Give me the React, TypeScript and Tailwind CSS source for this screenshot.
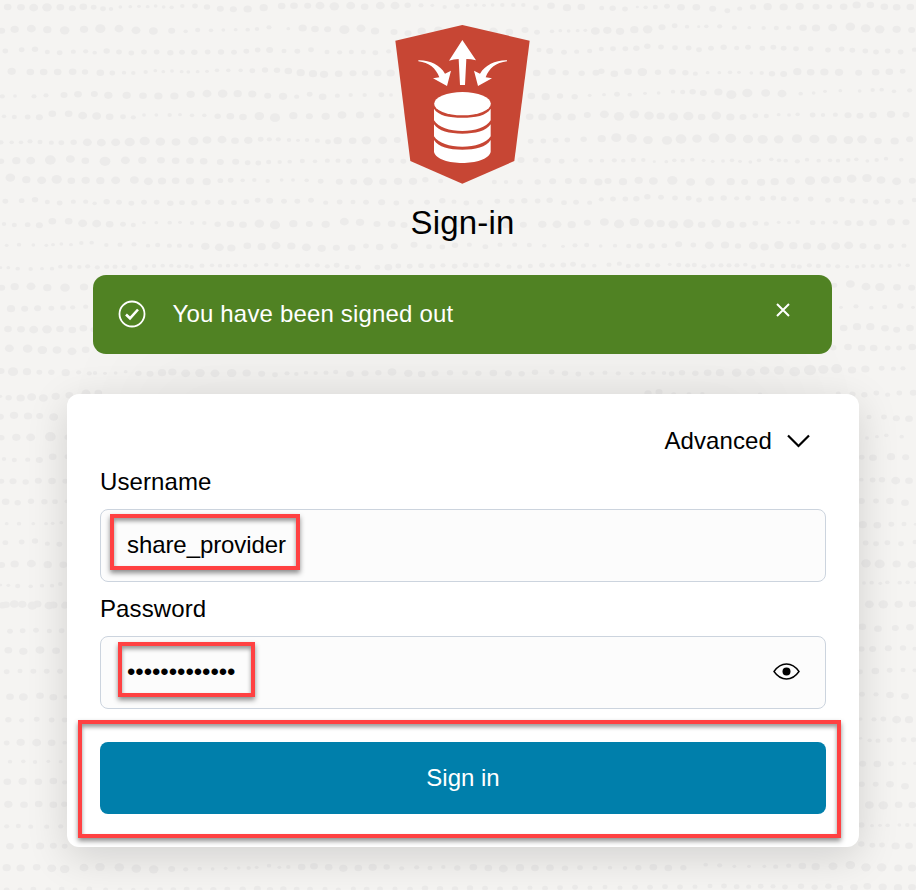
import React from "react";

// Dot texture: each token is "x,y,r" in thirds of a pixel, grouped by the
// horizontal offset (in pixels) of the strip it belongs to.
const strips: { x: number; y: number; dots: string }[] = [
  {
    x: 0,
    y: 0,
    dots: `23,21,12 63,22,12 101,23,14 141,22,15 181,22,12 217,25,11 250,20,12 281,22,9 309,26,9 333,27,7 361,21,6 391,20,6 417,19,6 443,20,6 467,18,6 491,21,6 515,22,7 547,18,7 585,18,9 621,21,10 661,26,11 700,28,11 743,27,13 791,23,13
    5,92,11 44,88,13 94,86,14 142,89,13 194,91,15 252,88,13 301,86,16 357,86,14 408,91,14 460,93,14 515,92,11 557,94,7 593,90,8 633,91,7 670,90,6 707,89,6 743,89,7 771,87,7 807,82,8
    16,153,9 65,149,9 105,148,10 142,156,8 179,158,9 220,155,8 257,154,8 284,158,7 320,153,10 357,156,9 394,159,9 432,156,9 470,156,9 511,158,10 546,157,9 583,157,10 623,156,9 663,156,10 702,157,9 739,154,9 773,150,9 809,150,11
    35,214,13 91,216,12 131,216,12 173,216,12 218,215,12 255,216,10 301,218,12 337,219,9 372,218,7 400,219,7 437,216,7 466,212,6 490,215,6 516,213,6 545,215,6 565,216,6 593,215,6 621,214,6 651,211,7 685,211,7 722,211,7 757,212,9 795,210,10 831,211,10
    7,289,8 45,288,6 102,289,8 138,286,8 192,285,11 234,283,12 283,282,11 325,286,13 380,286,13 429,287,12 475,288,13 523,288,13 572,283,13 621,281,14 668,281,15 713,281,13 757,282,13 803,287,11
    12,349,7 43,351,8 83,351,9 118,352,11 157,341,12 206,341,12 248,347,14 290,348,14 329,350,12 369,350,9 400,352,8 432,345,6 469,345,6 509,345,7 540,344,6 576,346,7 613,346,7 653,349,10 691,349,12 729,351,12 778,348,15 825,353,16
    3,427,8 35,427,7 63,427,7 90,424,8 120,426,8 154,428,8 184,428,9 221,427,10 262,427,14 304,428,14 347,427,14 389,426,16 434,423,16 481,425,15 528,426,14 580,423,16 621,420,14 666,419,14 705,422,12 745,421,13 782,418,9 808,418,8 835,418,8
    3,484,10 49,482,13 92,482,14 151,480,17 211,477,14 256,482,12 315,484,17 376,481,14 427,481,13 483,481,12 527,482,12 570,482,12 611,484,12 661,486,11 707,485,11 743,488,9 775,489,9 806,486,8 839,486,7
    31,533,15 79,539,13 125,541,14 170,538,16 214,542,12 257,541,13 301,542,13 347,541,14 403,540,14 445,544,14 486,543,13 527,542,12 570,543,13 620,545,13 661,542,9 692,541,9 728,541,7 763,540,7 803,543,7
    16,604,9 65,602,9 105,599,10 142,606,8 179,609,9 220,605,8 257,605,8 284,610,7 320,605,10 357,607,9 394,610,9 432,607,9 470,607,9 511,610,10 546,608,9 583,608,10 623,607,9 663,607,10 702,608,9 739,605,9 773,601,9 809,602,11
    12,672,7 43,675,8 83,674,9 118,676,11 157,664,12 206,664,12 248,670,14 290,671,14 329,673,12 369,673,9 400,675,8 432,668,6 469,668,6 509,668,7 540,667,6 576,669,7 613,669,7 653,673,10 691,672,12 729,674,12 778,671,15 825,675,16
    20,736,6 57,734,7 100,735,6 139,736,6 159,734,6 184,732,6 213,734,6 244,729,7 275,728,7 319,735,7 360,734,8 402,733,8 444,737,7 473,735,8 508,737,8 538,737,8 572,737,8 616,739,13 658,742,14 694,744,13 742,737,12 785,740,13 828,737,14
    2,803,5 25,803,6 53,806,7 92,807,7 126,806,6 156,806,7 181,800,7 210,800,8 238,801,7 263,799,8 292,802,8 320,800,8 345,800,8 371,799,7 404,803,9 440,798,6 462,798,7 488,797,7 514,797,7 537,799,7 560,798,7 575,801,7 606,797,8 636,796,7 660,797,7 684,797,7 708,796,7 735,797,7 768,796,7 799,794,7 829,795,7`,
  },
  {
    x: 280,
    y: 0,
    dots: `5,18,12 42,17,12 83,17,11 120,17,14 163,19,15 212,17,14 254,20,12 301,17,14 345,17,14 383,16,10 423,16,8 457,16,6 494,21,7 531,19,9 563,16,6 587,15,6 612,16,6 638,15,6 667,15,7 700,15,7 730,15,7 768,23,9 813,17,12 861,23,13 904,21,12
    25,86,6 68,84,13 105,87,12 143,88,11 193,89,16 243,85,14 285,93,13 342,96,11 384,100,11 425,93,13 475,90,13 530,92,12 585,92,12 640,94,14 688,96,12 735,90,11 771,97,9 816,94,7 841,92,6 866,93,6 893,92,6 916,91,6 946,93,14
    12,153,8 52,154,9 93,149,9 141,156,8 179,157,8 214,156,8 250,156,8 286,158,9 326,154,8 375,156,8 777,150,8 809,153,11 852,157,9 890,155,8 929,153,8
    25,213,12 62,218,13 99,221,13 132,223,13 176,221,12 219,220,11 255,219,10 293,219,12 332,219,13 770,219,12 816,215,12 857,218,10 905,220,10 948,218,11
    9,289,13 50,290,8 89,283,9 128,290,12 172,287,8 212,285,7 254,285,7 304,284,9 333,285,6 754,288,12 797,290,13 840,288,10 884,290,10 929,286,6
    40,347,13 88,349,11 137,349,13 186,345,14 240,345,13 291,346,11 335,348,9 749,350,12 787,351,13 831,350,14 875,351,13 922,345,11
    27,420,7 54,421,6 81,420,7 112,422,8 144,425,9 173,422,13 218,422,12 259,421,15 308,421,14 352,420,11 752,424,9 790,423,9 827,421,9 862,420,9 911,418,10
    29,485,7 67,483,8 105,484,7 142,482,8 174,482,8 207,484,9 255,483,10 294,483,9 334,482,9 370,484,9 723,480,11 767,480,9 803,482,10 845,484,9 887,481,8 932,482,7
    5,540,6 39,540,6 80,541,7 122,544,9 178,545,11 221,545,11 264,544,15 309,545,12 354,544,13 399,544,13 436,539,10 482,543,8 643,546,8 678,546,7 720,546,9 773,546,10 818,544,11 865,543,11 909,543,12 955,546,13
    12,604,9 52,604,9 93,601,9 137,608,8 179,606,9 219,606,8 258,607,9 305,607,11 349,609,9 393,606,9 441,607,9 487,602,10 522,605,8 559,609,9 600,607,9 652,604,9 695,604,9 733,602,10 773,603,9 809,601,10 852,608,9 888,607,9 929,608,8
    40,671,13 88,672,11 137,673,13 193,665,14 240,667,13 291,672,11 335,671,12 372,675,11 420,672,13 480,672,10 530,671,13 580,672,12 630,669,13 680,674,13 730,674,11 787,673,13 831,673,14 875,674,13 922,668,11
    34,738,13 79,742,14 125,745,13 169,743,11 215,743,12 258,738,9 299,741,12 343,739,11 402,734,11 447,740,9 487,741,9 525,736,10 568,734,8 616,740,9 660,734,8 704,734,8 748,735,8 793,737,7 849,739,6 885,736,8 920,735,8
    20,798,6 53,797,8 82,796,8 112,796,8 142,799,8 170,796,9 201,801,8 234,802,9 292,802,9 325,802,12 355,798,9 389,799,9 423,797,9 457,799,9 489,796,8 524,799,9 556,795,9 588,797,9 620,795,9 653,796,8 687,800,8 719,800,8 751,798,8 786,796,9 817,796,8 850,795,9 879,793,9 910,797,8 943,797,7`,
  },
  {
    x: 600,
    y: 0,
    dots: `5,24,8 38,25,10 75,27,9 112,21,5 137,22,7 166,21,8 201,19,9 243,22,12 289,22,12 338,26,11 382,32,9 419,26,8 459,21,10 503,20,13 551,21,13 599,19,13 648,20,11 688,20,9 731,20,12 770,15,13 811,15,12 853,20,12 890,22,12 931,21,12
    22,91,13 60,94,13 103,89,13 143,88,15 186,82,11 224,77,9 261,80,7 296,80,5 319,79,7 359,79,8 403,83,8 448,83,6 491,84,7 529,84,8 566,83,8 609,83,12 648,84,13 698,83,14 751,80,15 797,85,15 839,88,15 890,88,13 935,90,11
    4,147,8 39,146,9 76,146,9 109,145,10 142,139,10 183,141,9 225,143,9 266,144,9 297,149,9 333,145,9 371,142,10 410,144,8 444,142,9 487,145,9 520,142,9 551,145,9 588,146,9 632,146,9 684,150,9 725,147,9 757,151,9 796,153,9 828,156,9 863,153,9 902,156,9 943,149,8
    4,214,10 43,221,12 84,215,12 127,216,15 174,217,10 217,215,11 256,218,10 286,221,8 323,218,6 358,218,6 390,217,7 417,217,6 454,219,6 485,219,7 516,221,10 551,222,11 592,215,13 632,217,12 673,216,13 717,217,13 776,218,11 827,217,12 868,215,12 908,214,9
    12,284,6 51,283,9 89,284,7 135,280,6 176,279,6 219,275,7 248,276,8 278,275,10 310,279,11 355,276,13 394,284,16 442,279,16 497,279,14 546,281,14 602,281,7 641,279,6 675,274,6 721,272,6 779,273,6 818,270,7 845,269,7 882,274,7 929,271,8
    13,343,14 57,349,16 103,343,15 147,347,15 182,348,13 220,350,15 265,348,16 305,351,12 349,347,15 391,351,13 429,351,11 466,347,9 499,348,8 536,344,6 567,345,6 593,343,7 638,345,9 669,345,7 706,344,8 744,346,11 780,347,11 819,345,12 873,343,13 918,344,11
    5,416,13 49,413,16 95,415,16 144,420,15 201,421,16 243,417,17 291,416,15 342,414,17 392,415,17 444,417,16 488,418,16 536,418,15 591,416,16 643,417,16 696,418,16 745,420,15 786,418,15 834,423,12 884,423,13 929,418,11
    6,482,7 43,481,8 70,482,7 100,480,8 130,480,7 163,485,5 199,485,6 223,481,7 248,482,7 277,479,7 311,481,6 338,484,6 369,483,6 396,481,7 420,484,6 451,486,6 477,481,7 514,478,7 537,481,7 557,482,7 592,484,8 621,479,7 656,482,7 690,481,7 714,482,7 745,480,7 769,478,7 802,483,6 830,480,7 858,476,7 904,479,7
    24,543,11 69,545,13 116,541,13 160,543,14 217,541,16 272,546,14 330,545,15 392,545,13 434,546,11 483,547,13 524,545,13 572,543,14 630,542,16 676,540,14 712,539,13 755,536,15 801,534,15 843,540,14 890,544,14 937,542,11
    4,598,8 39,597,9 76,597,9 109,596,10 142,590,10 183,592,9 225,594,9 266,595,9 297,600,9 333,596,9 371,594,10 410,595,8 444,594,9 487,596,9 520,594,9 551,596,9 588,598,9 632,597,9 684,601,9 725,598,9 757,603,9 796,604,9 828,607,9 863,604,9 902,607,9 943,600,8
    13,666,14 57,672,16 103,666,15 147,670,15 182,671,13 220,673,15 265,671,16 305,674,12 349,670,15 391,674,13 429,674,11 466,670,9 499,671,8 536,667,6 567,668,6 593,666,7 638,668,9 669,668,7 706,667,8 744,669,11 780,670,11 819,668,12 873,666,13 918,667,11
    2,738,6 45,737,7 86,738,8 119,738,10 155,738,10 193,737,9 236,733,11 280,735,9 328,736,14 375,735,13 414,738,10 460,737,14 494,741,13 537,735,15 580,737,13 621,738,13 665,740,14 707,738,14 746,736,14 789,738,11 832,740,11 873,738,9 912,737,8
    27,794,8 58,791,8 85,798,8 112,796,8 143,795,8 173,796,8 209,793,6 236,795,8 263,796,8 283,795,8 312,799,8 338,796,8 363,796,8 387,796,8 411,796,8 436,794,7 461,800,8 488,795,8 516,798,8 550,798,8 580,798,8 598,800,8 628,796,8 655,798,8 685,797,8 713,799,8 742,800,6 771,800,7 791,798,7 818,798,7 844,798,7 869,798,7 898,795,6 923,796,7`,
  },
  {
    x: 0,
    y: 270,
    dots: `5,53,11 44,50,13 93,49,14 142,53,13 195,53,15 252,51,13
    33,116,13 74,116,11 113,115,11 154,115,9 189,113,9 218,112,8 257,110,8
    24,177,12 63,178,12 101,179,14 141,178,15 180,177,12 217,180,12 250,175,12 280,179,9
    28,235,14 83,236,15 127,240,15 171,240,14 216,244,14 257,239,12
    3,303,11 39,305,16 81,305,13 118,307,9 154,307,10 197,308,13 236,307,8 268,310,8
    1,379,6 26,383,10 62,384,13 95,381,14 130,384,14 167,379,13 208,376,12 258,370,14 295,369,12
    1,440,11 42,436,13 84,438,13 119,438,11 161,441,14
    4,503,10 49,502,13 92,502,14 151,500,17 203,502,10
    12,567,7 43,570,8 83,569,8 118,570,11 158,560,12 202,560,9
    4,634,9 39,634,11 77,636,10 115,632,11 156,633,12 196,634,9
    17,695,12 53,698,10 93,694,10 133,695,10 165,695,9 200,694,7
    20,761,6 57,761,7 100,761,6 138,761,6 158,760,6 184,758,6
    16,818,9 65,816,9 105,813,10 142,821,8 178,823,9
    5,885,11 44,882,13 94,881,14 143,884,13 190,884,12
    2,945,5 25,946,6 53,948,8 92,949,7 126,947,7 156,947,7 181,942,7
    8,1006,12 43,1002,14 97,1007,15 147,1007,14 194,1007,11`,
  },
  {
    x: 640,
    y: 265,
    dots: `583,61,9 631,57,14 678,65,14 720,66,15 771,67,12 815,68,11
    603,127,6 648,124,8 694,128,7 734,126,8 781,123,10 819,127,6
    611,189,12 651,185,13 691,185,13 735,190,12 770,194,11 810,189,12
    580,248,10 624,246,12 665,249,12 701,249,12 743,249,9 777,249,9 817,246,12
    11,325,7 40,323,7 72,324,7 95,326,9 126,323,10 166,325,10 203,323,12 240,323,13 290,323,15 332,322,14 374,317,15 417,316,16 464,320,17 510,315,19 550,313,16 590,311,17 636,315,13 676,312,13 725,310,9 760,311,8 789,310,8
    24,385,11 57,381,11 101,388,8 147,388,8 187,387,7 360,388,7 595,386,8 637,388,10 673,389,10 709,384,9 743,389,8 778,384,9 820,383,11
    687,456,8 732,456,9 769,460,11 807,461,12
    681,519,6 711,515,6 739,511,7 785,515,7
    665,577,9 699,578,12 753,575,13 797,577,11`,
  },
  {
    x: 85,
    y: 265,
    dots: `30,324,7 60,325,6 92,324,6 122,320,6 160,325,10 195,326,11 231,323,13 262,321,13 302,325,14 345,324,15 390,325,14 440,324,15 485,324,13 530,326,11 570,329,9 606,325,8 634,327,7 663,323,7 692,324,7 723,323,8 752,321,8 795,326,12 840,325,11 880,323,10 921,321,14 970,325,13 1010,327,12 1050,325,11 1095,323,10 1140,323,9 1180,325,10 1225,324,12 1270,325,11 1310,326,10 1350,322,10 1400,321,9 1440,325,10 1480,327,9 1520,325,8 1560,323,8 1600,325,8 1640,325,7`,
  },
  {
    x: 846,
    y: 380,
    dots: `46,299,7 80,300,9 108,299,10 149,302,14 189,302,12
    46,363,11 90,363,9 132,363,12 177,368,12
    50,434,13 94,436,12 136,433,9 174,432,8 208,433,5
    59,489,9 90,491,9 124,488,9 165,491,9 207,486,8
    60,550,15 101,552,16 152,552,13 198,554,14
    54,609,6 77,608,7 103,610,6 124,607,7 161,608,7 185,607,7 208,608,5`,
  },
  {
    x: 700,
    y: 600,
    dots: `508,13,14 550,13,15 596,13,13 638,12,12
    487,80,12 534,86,12 586,84,11 630,82,12
    484,147,10 518,147,11 565,145,11 609,144,10 644,146,7
    480,215,9 526,213,12 569,211,9 609,210,8 644,211,7
    486,283,9 528,283,8 570,285,12 615,289,12
    482,357,6 522,358,8 550,357,9 590,359,14 627,359,13
    482,415,5 509,421,7 534,422,8 569,420,9 611,419,9 641,419,9
    488,491,11 532,492,12 573,491,9 612,490,7 645,490,6
    485,553,10 527,553,9 570,553,12 615,559,12
    508,615,14 550,616,15 596,614,12 637,615,12
    484,675,10 516,677,6 540,676,6 563,676,7 598,675,6 622,675,7 645,675,6
    484,732,10 517,736,9 546,735,9 587,738,13 627,737,12
    17,794,7 59,796,8 103,799,6 147,799,6 193,799,6 227,800,8 266,797,8 307,798,12 347,800,13 399,799,14 451,795,15 498,802,15 545,802,15 595,804,13 636,804,13
    30,858,8 72,858,9 110,860,9 146,860,8 182,859,9 219,859,8 255,861,9 303,859,10 344,862,10 385,859,10 420,863,10 462,862,12 502,859,12 548,861,13 594,863,13 636,862,12`,
  },
  {
    x: 60,
    y: 590,
    dots: `-162,44,12 -113,43,13 -68,42,13 -20,45,13 15,41,8
    -150,124,9 -112,122,9 -72,121,9 -32,123,8 5,122,9
    -155,181,12 -110,184,13 -60,180,14 -12,182,12
    -160,245,9 -120,243,8 -80,244,9 -40,244,9 0,244,9
    -150,320,12 -110,321,14 -60,317,12 -20,322,12 17,321,7
    -155,389,10 -115,391,8 -70,388,9 -25,390,9 14,390,9
    -160,459,9 -118,457,13 -70,458,14 -25,458,12 14,458,7
    -150,515,7 -110,514,7 -75,516,7 -35,514,6 2,515,6
    -158,575,12 -112,574,13 -65,575,12 -20,573,12 14,577,8
    -155,643,13 -108,644,12 -64,642,12 -20,644,12 13,643,10
    -160,709,8 -125,708,8 -88,710,8 -40,710,8 2,709,8
    -150,769,12 -105,768,12 -60,768,13 -20,767,11 14,769,9
    -160,833,13 -118,834,13 -70,832,12 -25,835,14 14,837,15 72,833,14 120,831,15 178,832,15 229,836,15 281,838,15 335,837,11 377,838,8 419,836,7 458,837,6 497,835,6 536,834,6 566,834,7 590,832,6 627,827,7 658,832,6 685,831,7 725,831,12 762,829,12 806,832,12 850,835,13 895,834,12 938,832,13 980,831,10 1025,835,8 1070,832,8 1110,834,8 1150,831,7 1192,834,10 1240,832,12 1285,834,12 1330,836,14 1380,833,13 1425,834,12 1470,833,12 1515,835,10 1560,833,9 1605,834,8 1650,833,7 1695,834,7 1735,833,10 1780,832,12 1825,834,12 1870,833,10
    -160,900,9 -120,899,8 -80,898,9 -35,899,9 5,898,9 45,899,8 88,897,9 137,899,8 180,899,8 220,899,7 260,899,8 300,899,9 340,899,9 380,898,9 419,899,9 460,899,10 502,898,9 548,898,10 592,896,11 630,899,10 670,897,10 710,898,9 750,898,9 795,897,8 835,899,8 880,896,8 920,898,9 960,897,9 1005,896,8 1050,898,9 1095,895,10 1140,896,10 1185,897,10 1230,894,10 1275,895,9 1320,897,9 1365,895,9 1410,893,8 1455,895,9 1500,893,9 1545,892,9 1590,893,8 1635,891,8 1680,893,8 1725,892,9 1770,892,9 1815,890,9 1860,891,9 1905,890,8`,
  },
];

function Texture() {
  return (
    <svg className="absolute inset-0 -z-10" width="916" height="890" fill="#ecebea" aria-hidden="true">
      {strips.map((s, i) => (
        <g key={i} transform={`translate(${s.x} ${s.y}) scale(.33333)`}>
          {s.dots
            .trim()
            .split(/\s+/)
            .map((t, j) => {
              const [x, y, r] = t.split(",").map(Number);
              return <ellipse key={j} cx={x} cy={y} rx={r * 0.96} ry={r * 0.82} />;
            })}
        </g>
      ))}
    </svg>
  );
}

function Logo() {
  return (
    <svg className="h-[159px] w-[136px]" viewBox="345 75 408 477" aria-hidden="true">
      <path fill="#c74634" d="M547 75 749 122 703 483 547 551 391 483 346 122Z" />
      <g fill="#fff">
        <path d="M547 120 588 181Q572 177 559 177L555 255H540L536 177Q521 177 507 182Z" />
        <path d="M415 181C449 180 480 195 495 221L513 212 501 258 459 235 478 232C468 205 447 188 415 184Z" />
        <path d="M681 181C647 180 616 195 600 221L582 212 594 258 636 235 617 232C627 205 648 188 681 184Z" />
        <ellipse cx="547.500" cy="311" rx="85" ry="35" />
        <path d="M462 326C475 347 508 353 547 353S619 347 632 326V361C619 383 585 393 547 393S475 383 462 361Z" />
        <path d="M462 373C475 393 508 401 547 401S619 393 632 373V409C619 430 585 440 547 440S475 430 462 409Z" />
        <path d="M462 420C475 441 508 449 547 449S619 441 632 420V456C627 478 585 489 547 489S467 478 462 456Z" />
      </g>
    </svg>
  );
}

const mark =
  "pointer-events-none absolute border-4 border-[#ff4142] shadow-[0_3px_5px_rgba(0,0,0,0.45),inset_0_3px_4px_rgba(0,0,0,0.4)]";

export default function App() {
  return (
    <div className="relative isolate h-[890px] w-[916px] overflow-hidden bg-[#f5f4f2] pl-[67px] font-['Liberation_Sans',Arial,sans-serif] text-2xl leading-7 text-black">
      <Texture />
      <main className="flex w-[792px] flex-col items-center pt-[25px]">
        <Logo />
        <h1 className="mt-[19px] mr-px text-[33px] leading-[40px] tracking-[0.2px]">Sign-in</h1>

        <div className="relative z-10 mt-8 mr-0.5 flex h-[79px] w-[739px] items-center rounded-[13px] bg-[#508223] pr-[42px] pb-0.5 pl-[25px] text-white">
          <svg width="28" height="28" viewBox="0 0 28 28" fill="none" stroke="currentColor" aria-hidden="true">
            <circle cx="14" cy="14" r="12.500" strokeWidth="1.800" />
            <path d="m8 14.500 4 3.800 8-8.800" strokeWidth="2.600" />
          </svg>
          <span className="ml-[27px] tracking-[0.17px]">You have been signed out</span>
          <svg className="mb-[7px] ml-auto" width="14" height="14" viewBox="0 0 14 14" fill="none" stroke="currentColor" aria-hidden="true">
            <path d="m1 1 12 12M13 1 1 13" strokeWidth="2" />
          </svg>
        </div>

        <section className="relative mt-10 flex h-[453px] w-full flex-col rounded-xl bg-white px-[33px] pt-[33px] shadow-[0_10px_40px_rgba(0,0,0,0.145),0_-105px_90px_-60px_rgba(0,0,0,0.03)]">
          <div className="flex items-center justify-end gap-[15px] pr-4">
            <span className="tracking-[0.1px]">Advanced</span>
            <svg width="23" height="14" viewBox="0 0 23 14" fill="none" stroke="currentColor" aria-hidden="true">
              <path d="m1 1.500 10.500 10.500L22 1.500" strokeWidth="2.200" />
            </svg>
          </div>
          <label className="mt-[13px] tracking-[0.1px]">Username</label>
          <div className="mt-[13px] flex h-[73px] items-center rounded-lg border border-[#ccd4de] bg-[#fcfcfc] px-[26px] pb-0.5 tracking-[-0.08px]">
            share_provider
          </div>
          <label className="mt-[13px] tracking-[0.1px]">Password</label>
          <div className="mt-[13px] flex h-[73px] items-center justify-between rounded-lg border border-[#ccd4de] bg-[#fcfcfc] pr-[25px] pb-0.5 pl-[26px]">
            <span className="tracking-[-0.06px]">•••••••••••••</span>
            <svg width="27" height="17" viewBox="0 0 27 17" fill="none" stroke="currentColor" aria-hidden="true">
              <path d="M1 8.500C4.500 3.500 8.500 1 13.500 1S22.500 3.500 26 8.500C22.500 13.500 18.500 16 13.500 16S4.500 13.500 1 8.500Z" strokeWidth="1.400" />
              <circle cx="13.500" cy="8.500" r="4" fill="currentColor" stroke="none" />
            </svg>
          </div>
          <button className="mt-[33px] h-[72px] rounded-lg bg-[#007fab] text-white">Sign in</button>

          <div className={`${mark} left-[43px] top-[120px] h-[56px] w-[190px]`} />
          <div className={`${mark} left-[51px] top-[248px] h-[55px] w-[137px]`} />
          <div className={`${mark} left-[11px] top-[326px] h-[118px] w-[763px]`} />
        </section>
      </main>
    </div>
  );
}
